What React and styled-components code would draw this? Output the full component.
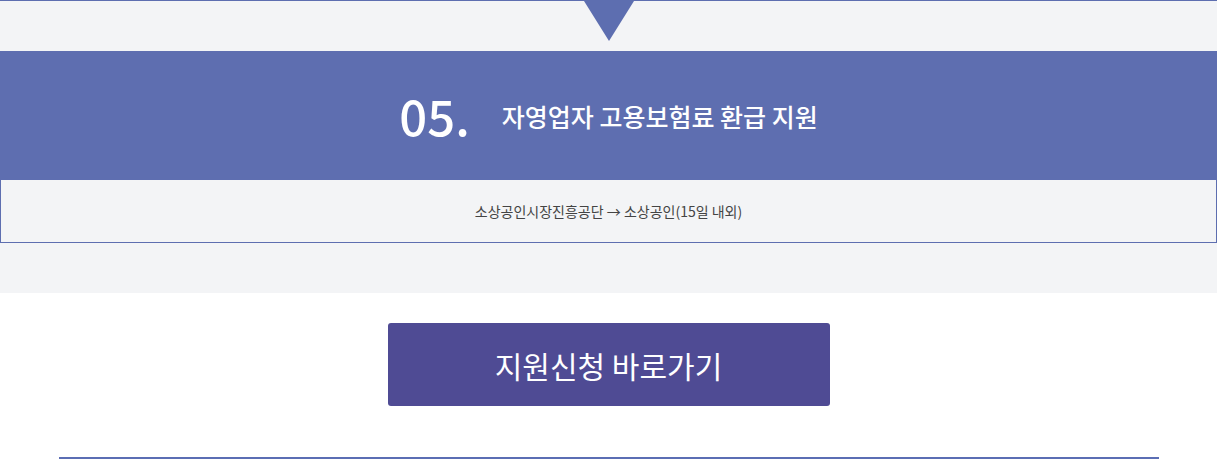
import React from "react";
import styled, { createGlobalStyle } from "styled-components";

const GlobalStyle = createGlobalStyle`
  html, body {
    margin: 0;
    padding: 0;
    background: #ffffff;
    font-family: "Noto Sans CJK KR", "Noto Sans", sans-serif;
  }
`;

const StepSection = styled.section`
  background: #f3f4f6;
  border-top: 1px solid #5d6eb0;
  padding-bottom: 50px;
`;

const Arrow = styled.div`
  width: 0;
  height: 0;
  margin: 0 auto 10px;
  border-left: 25px solid transparent;
  border-right: 25px solid transparent;
  border-top: 40px solid #5d6eb0;
`;

const StepHeader = styled.div`
  height: 129px;
  background: #5e6eb0;
  color: #ffffff;
  display: flex;
  align-items: center;
  justify-content: center;
  gap: 32px;
`;

const StepNum = styled.span`
  font-size: 49px;
  font-weight: 500;
  line-height: 1;
  transform: translateY(-1px);
`;

const StepTitle = styled.h3`
  margin: 0;
  font-size: 25px;
  font-weight: 500;
  line-height: 1;
  transform: translateY(1px);
`;

const StepBody = styled.div`
  height: 62px;
  border: 1px solid #5d6eb0;
  border-top: none;
  display: flex;
  align-items: center;
  justify-content: center;
  font-size: 14px;
  color: #444444;
`;

const ButtonRow = styled.div`
  display: flex;
  justify-content: center;
  padding: 30px 0 51px;
`;

const ApplyButton = styled.a`
  width: 442px;
  height: 83px;
  box-sizing: border-box;
  border-radius: 3px;
  background: #4f4b94;
  color: #ffffff;
  font-size: 30px;
  display: flex;
  align-items: center;
  justify-content: center;
  text-decoration: none;
  cursor: pointer;
`;

const Divider = styled.hr`
  width: 1100px;
  height: 2px;
  margin: 0 auto;
  border: none;
  background: #5b6eb4;
`;

const App = () => {
  return (
    <>
      <GlobalStyle />
      <StepSection>
        <Arrow />
        <StepHeader>
          <StepNum>05.</StepNum>
          <StepTitle>자영업자 고용보험료 환급 지원</StepTitle>
        </StepHeader>
        <StepBody>소상공인시장진흥공단 → 소상공인(15일 내외)</StepBody>
      </StepSection>
      <ButtonRow>
        <ApplyButton>지원신청 바로가기</ApplyButton>
      </ButtonRow>
      <Divider />
    </>
  );
};

export default App;
